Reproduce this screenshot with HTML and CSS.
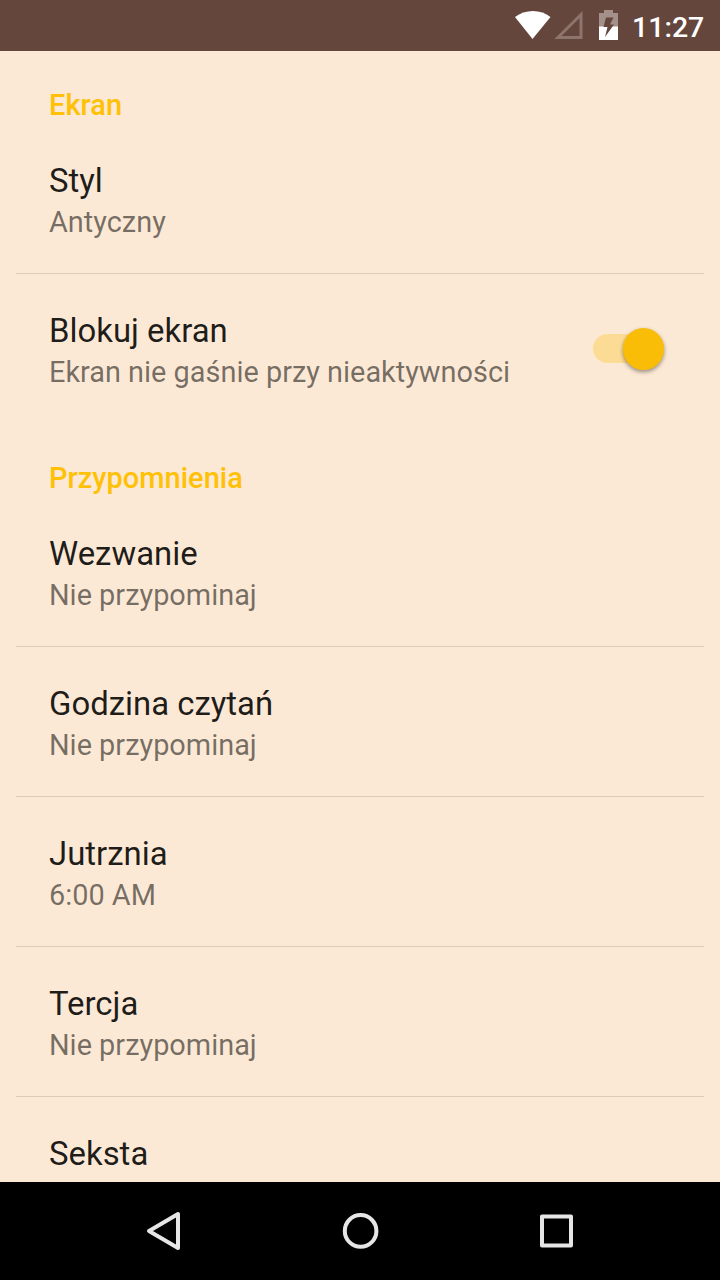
FILE: index.html
```html
<!DOCTYPE html>
<html lang="pl">
	<head>
		<meta charset="UTF-8" />
		<meta name="viewport" content="width=device-width, initial-scale=1.0" />
		<title>Ustawienia</title>
		<link rel="stylesheet" href="styles.css">
	</head>
	<body>
		<header class="status-bar">
			<svg viewBox="0 0 104 51" width="104" height="51">
				<path fill="#fff" d="M0 17C10 9 26 9 35.500 17L17.500 39Z" />
				<path fill="none" stroke="#8d756e" stroke-width="3" d="M43 37.500H66V14.500Z" />
				<path fill="#a3908b" d="M84 13h5v-3h9v3h5v14H84Z" />
				<path fill="#fff" d="M84 26.500h19V40H84Z" />
				<path fill="#65463d" d="M91 17.500H98.500L95 24.500H99L90 37L92.500 27H88.500Z" />
			</svg>
			<span class="clock">11:27</span>
		</header>
		<main class="settings">
			<section>
				<h2>Ekran</h2>
				<div class="item">
					<h3>Styl</h3>
					<p>Antyczny</p>
				</div>
				<div class="item with-switch">
					<div>
						<h3>Blokuj ekran</h3>
						<p>Ekran nie gaśnie przy nieaktywności</p>
					</div>
					<span class="switch"></span>
				</div>
			</section>
			<section>
				<h2>Przypomnienia</h2>
				<div class="item">
					<h3>Wezwanie</h3>
					<p>Nie przypominaj</p>
				</div>
				<div class="item">
					<h3>Godzina czytań</h3>
					<p>Nie przypominaj</p>
				</div>
				<div class="item">
					<h3>Jutrznia</h3>
					<p>6:00 AM</p>
				</div>
				<div class="item">
					<h3>Tercja</h3>
					<p>Nie przypominaj</p>
				</div>
				<div class="item">
					<h3>Seksta</h3>
				</div>
			</section>
		</main>
		<nav class="nav-bar">
			<svg viewBox="0 0 48 48"><path d="M38 7v34L9 24Z" /></svg>
			<svg viewBox="0 0 48 48"><circle cx="24.600" cy="23.900" r="15.800" /></svg>
			<svg viewBox="0 0 48 48"><path d="M10 9.400h29v29.200H10Z" /></svg>
		</nav>
	</body>
</html>
```

FILE: styles.css
```css
body {
	display: flex;
	flex-direction: column;
	height: 100vh;
	margin: 0;
	overflow: hidden;
	background: #fce9d5;
	font-family: Roboto, 'Liberation Sans', sans-serif;
}
h2,
h3,
p {
	margin: 0;
}
.status-bar {
	display: flex;
	flex: none;
	align-items: center;
	justify-content: flex-end;
	gap: 13px;
	height: 51px;
	padding-right: 16px;
	box-sizing: border-box;
	background: #65463d;
	color: #fff;
}
.clock {
	width: 72px;
	padding-top: 3px;
	font-size: 28.500px;
	font-weight: 500;
	text-align: right;
}
.settings {
	flex: 1;
	min-height: 0;
	padding: 0 16px;
	overflow: hidden;
}
h2 {
	height: 73px;
	padding: 0 33px;
	box-sizing: border-box;
	color: #ffc107;
	font-size: 29px;
	font-weight: 500;
	line-height: 108px;
}
.item {
	height: 150px;
	padding: 36px 33px 0;
	box-sizing: border-box;
	border-bottom: 1px solid rgba(0, 0, 0, 0.12);
}
.item:last-child {
	border-bottom-color: transparent;
}
.item h3 {
	color: rgba(0, 0, 0, 0.88);
	font-size: 32.900px;
	font-weight: 400;
	line-height: 42px;
}
.item p {
	color: rgba(0, 0, 0, 0.54);
	font-size: 28.900px;
	line-height: 40px;
}
.with-switch {
	display: flex;
	justify-content: space-between;
}
.switch {
	width: 62px;
	height: 29px;
	margin: 24px 16px 0 0;
	border-radius: 15px;
	background: #fcdc95;
}
.switch::after {
	content: '';
	display: block;
	width: 41.500px;
	height: 41.500px;
	margin: -6px 0 0 29.700px;
	border-radius: 50%;
	background: #fabd07;
	box-shadow: 0 2px 4px rgba(0, 0, 0, 0.4);
}
.nav-bar {
	display: flex;
	flex: none;
	align-items: center;
	justify-content: center;
	gap: 148px;
	height: 98px;
	background: #000;
}
.nav-bar svg {
	width: 48px;
	height: 48px;
	fill: none;
	stroke: #e6e6e6;
	stroke-width: 4;
	stroke-linejoin: round;
}
```
